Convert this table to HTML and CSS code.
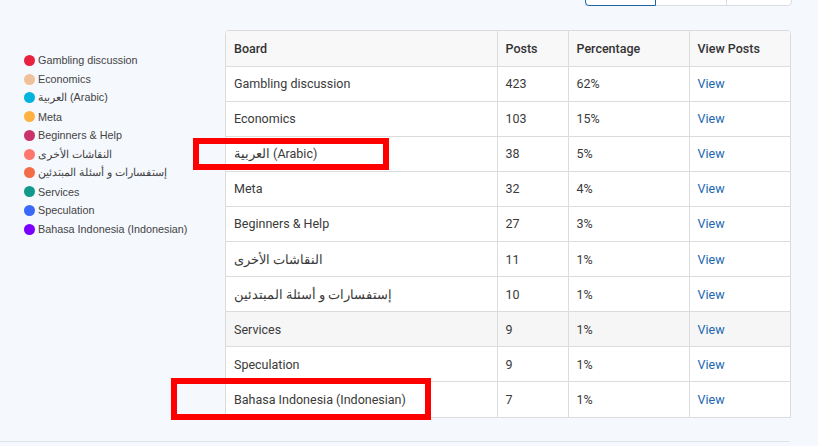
FILE: index.html
```html
<!DOCTYPE html>
<html>
<head>
<meta charset="utf-8">
<link rel="stylesheet" href="styles.css">
</head>
<body>
<div class="page">
  <div class="toolbar">
    <div class="btn-group">
      <span class="btn active"></span>
      <span class="btn"></span>
      <span class="btn last"></span>
    </div>
  </div>
  <div class="content">
    <ul class="legend">
      <li><span class="dot" style="background:#e8213f"></span>Gambling discussion</li>
      <li><span class="dot" style="background:#f0c09a"></span>Economics</li>
      <li><span class="dot" style="background:#00b4dc"></span>العربية (Arabic)</li>
      <li><span class="dot" style="background:#ffb142"></span>Meta</li>
      <li><span class="dot" style="background:#c9336a"></span>Beginners &amp; Help</li>
      <li><span class="dot" style="background:#ff766f"></span>النقاشات الأخرى</li>
      <li><span class="dot" style="background:#f46b48"></span>إستفسارات و أسئلة المبتدئين</li>
      <li><span class="dot" style="background:#12998b"></span>Services</li>
      <li><span class="dot" style="background:#3b68f7"></span>Speculation</li>
      <li><span class="dot" style="background:#7b00ff"></span>Bahasa Indonesia (Indonesian)</li>
    </ul>
    <div class="table-wrap">
      <table class="boards">
        <thead>
          <tr><th class="c1">Board</th><th class="c2">Posts</th><th class="c3">Percentage</th><th class="c4">View Posts</th></tr>
        </thead>
        <tbody>
          <tr><td>Gambling discussion</td><td>423</td><td>62%</td><td><a>View</a></td></tr>
          <tr><td>Economics</td><td>103</td><td>15%</td><td><a>View</a></td></tr>
          <tr><td>العربية (Arabic)</td><td>38</td><td>5%</td><td><a>View</a></td></tr>
          <tr><td>Meta</td><td>32</td><td>4%</td><td><a>View</a></td></tr>
          <tr><td>Beginners &amp; Help</td><td>27</td><td>3%</td><td><a>View</a></td></tr>
          <tr><td>النقاشات الأخرى</td><td>11</td><td>1%</td><td><a>View</a></td></tr>
          <tr><td>إستفسارات و أسئلة المبتدئين</td><td>10</td><td>1%</td><td><a>View</a></td></tr>
          <tr class="hover"><td>Services</td><td>9</td><td>1%</td><td><a>View</a></td></tr>
          <tr><td>Speculation</td><td>9</td><td>1%</td><td><a>View</a></td></tr>
          <tr><td>Bahasa Indonesia (Indonesian)</td><td>7</td><td>1%</td><td><a>View</a></td></tr>
        </tbody>
      </table>
    </div>
  </div>
  <div class="rule"></div>
  <div class="mark mark-1"></div>
  <div class="mark mark-2"></div>
</div>
</body>
</html>
```

FILE: styles.css
```css
* { box-sizing: border-box; }
html, body {
  margin: 0;
  padding: 0;
  background: #f5f8fd;
  overflow: hidden;
}
.page {
  position: relative;
  width: 818px;
  height: 446px;
  font-family: Roboto, "Liberation Sans", Arial, sans-serif;
  color: #333;
}
.toolbar {
  display: flex;
  justify-content: flex-end;
  padding-right: 26px;
  height: 6px;
}
.btn-group {
  display: flex;
  margin-top: -30px;
  height: 36px;
  border: 1px solid #d9dde3;
  border-radius: 0 0 4px 0;
  background: #fff;
}
.btn {
  display: block;
  width: 71px;
  height: 100%;
  border-right: 1px solid #d9dde3;
}
.btn.active {
  width: 71px;
  border: 1px solid #1e63a8;
  margin: -1px 0 -1px -1px;
  height: calc(100% + 2px);
  border-radius: 0 0 0 4px;
}
.btn.last {
  width: 64px;
  border-right: none;
}
.content {
  display: flex;
  align-items: flex-start;
  padding-top: 24px;
}
.legend {
  list-style: none;
  margin: 0;
  padding: 21px 0 0 24px;
  width: 226px;
  font-family: "Liberation Sans", Arial, sans-serif;
  font-size: 10.8px;
  color: #444;
}
.legend li {
  display: flex;
  align-items: center;
  height: 18.75px;
  white-space: nowrap;
}
.dot {
  display: inline-block;
  width: 11px;
  height: 11px;
  border-radius: 50%;
  margin-right: 3px;
  flex: none;
}
.table-wrap {
  width: 566px;
  margin-left: -1px;
  border: 1px solid #dcdcdc;
  border-radius: 4px 4px 0 0;
  overflow: hidden;
  background: #fff;
}
.boards {
  width: 100%;
  border-collapse: collapse;
  font-size: 12.5px;
  table-layout: fixed;
}
.boards th, .boards td {
  text-align: left;
  padding: 0 8px;
  border-left: 1px solid #dcdcdc;
  border-top: 1px solid #dcdcdc;
}
.boards th:first-child, .boards td:first-child { border-left: none; }
.boards thead th {
  border-top: none;
  height: 35px;
  font-weight: 500;
  background: #f8f8f8;
  color: #333;
}
.boards td {
  height: 35.1px;
  color: #3a3a3a;
}
.boards tr.hover td { background: #f6f6f6; }
.c1 { width: 271px; }
.c2 { width: 71px; }
.c3 { width: 121px; }
.c4 { width: auto; }
.boards a {
  color: #1a66b0;
  text-decoration: none;
}
.rule {
  margin-top: 23px;
  width: 790px;
  height: 1px;
  background: #dfe4ea;
}
.mark {
  position: absolute;
  border: 6px solid #ff0000;
}
.mark-1 { left: 193px; top: 138px; width: 196px; height: 32px; }
.mark-2 { left: 171px; top: 378px; width: 260px; height: 42px; }
```
